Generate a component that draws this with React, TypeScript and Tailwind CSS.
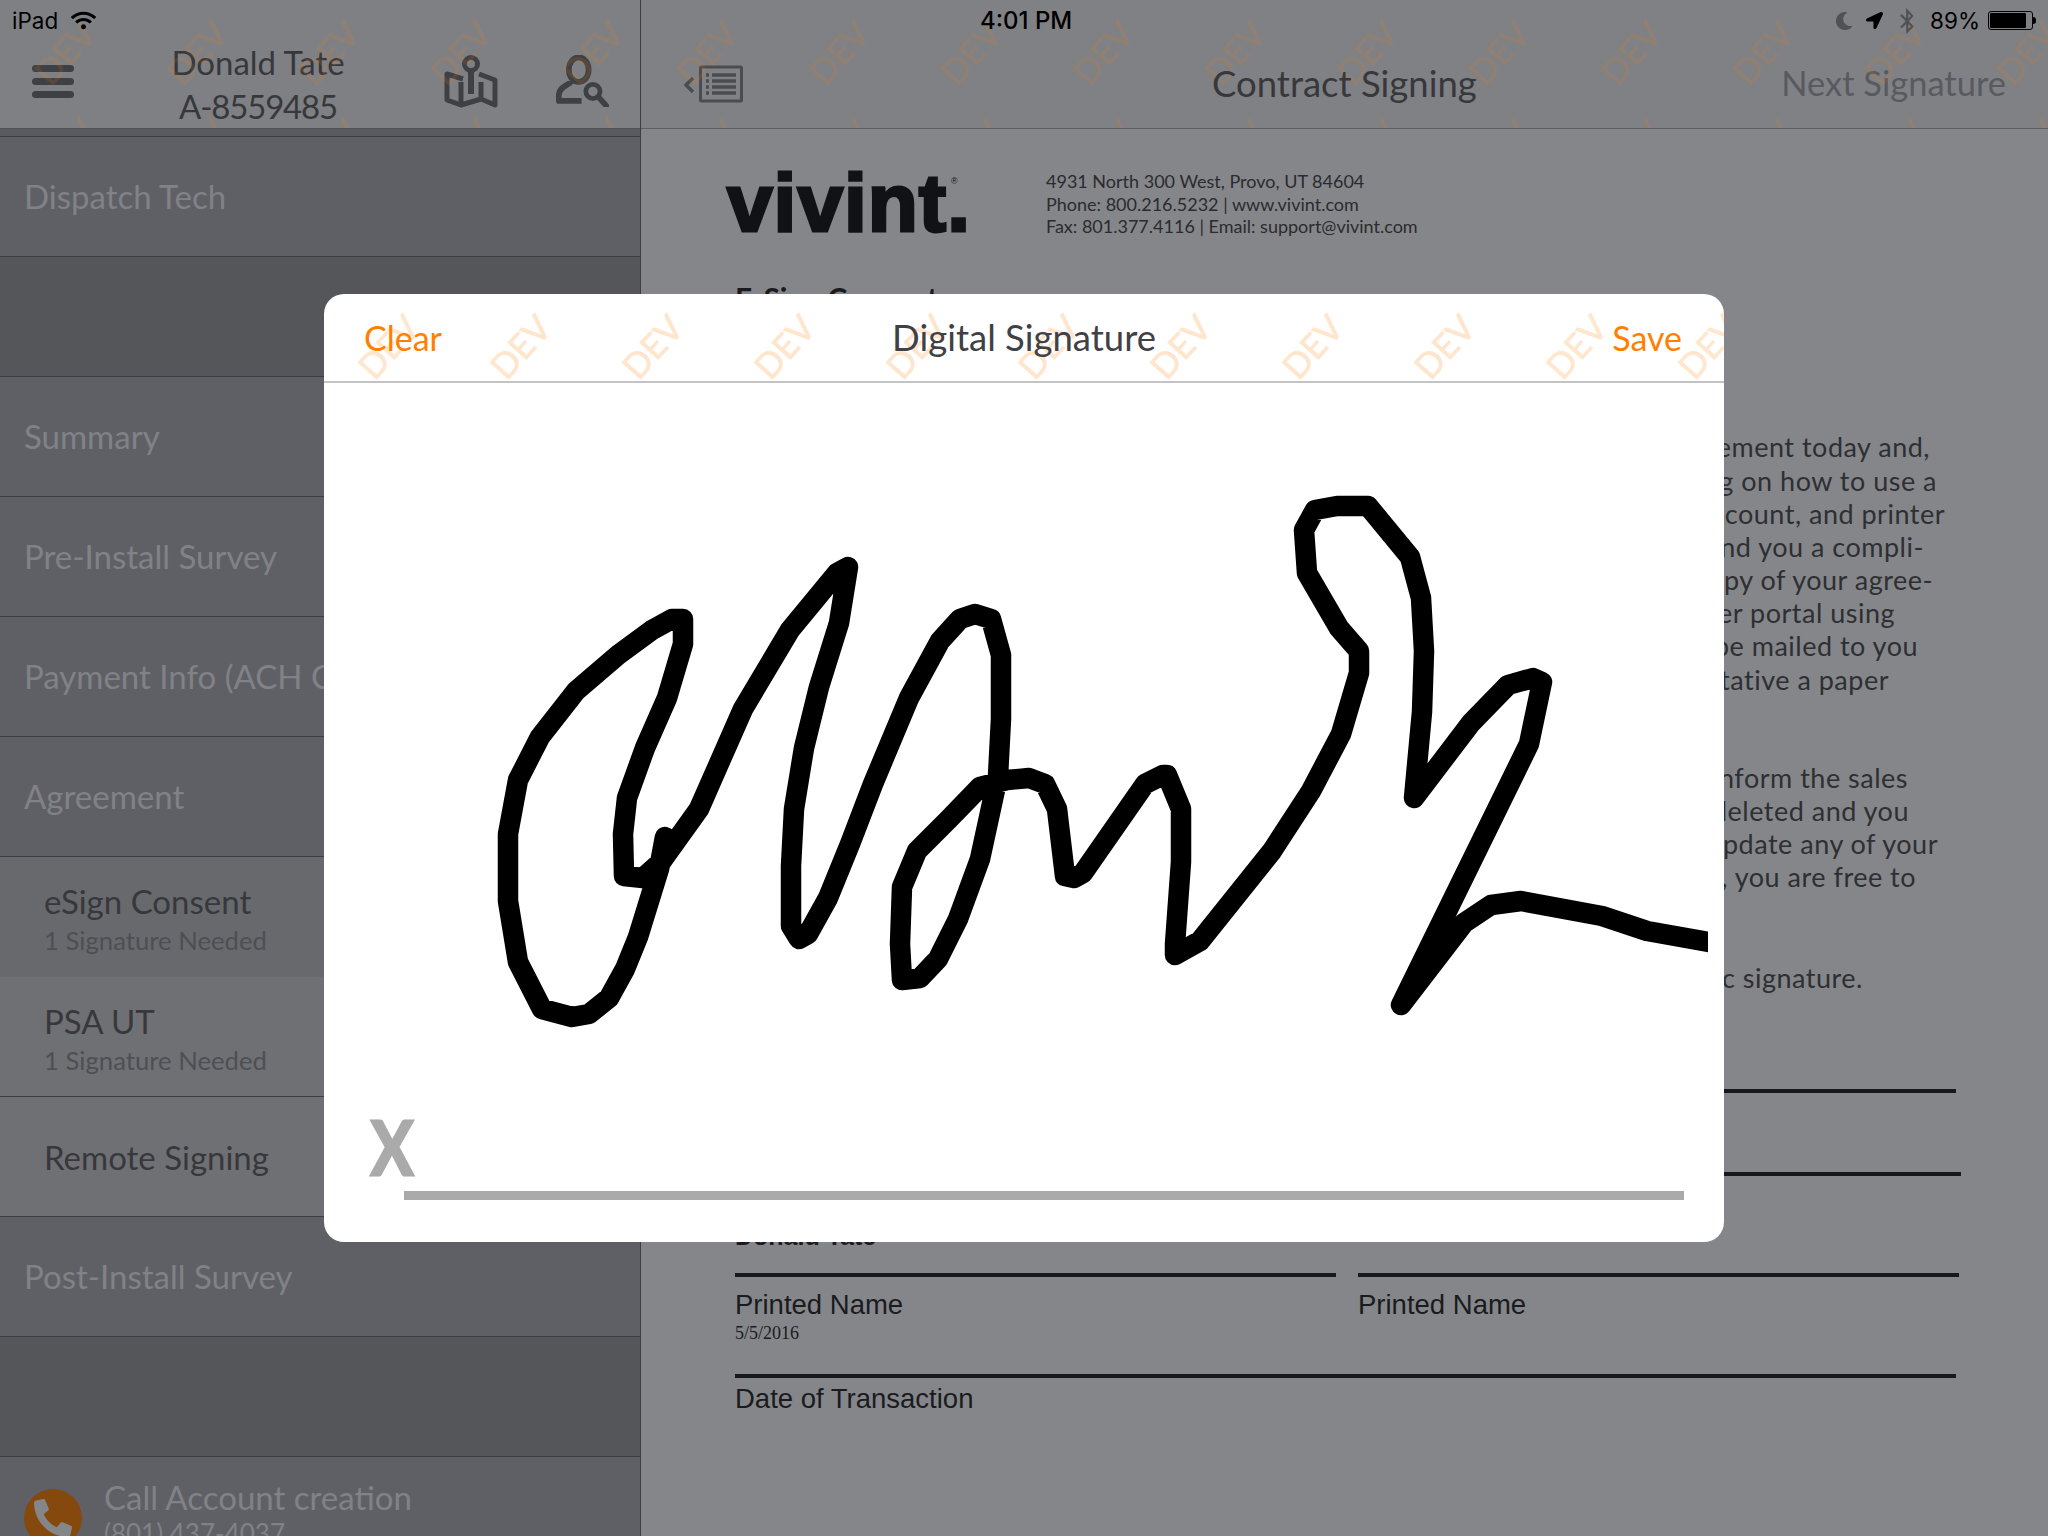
import React from 'react';
import { FaBluetoothB, FaLocationArrow, FaMoon, FaPhoneAlt, FaWifi } from 'react-icons/fa';

const SIGNATURE =
  'M665 837L659 869L638 937L625 969L609 998L589 1014L572 1017L542 1009L518 962L508 901L508 834L518 780L540 737L576 691L618 655L652 630L672 619L683 619L683 644L667 698L645 748L627 798L623 834L624 876L643 878L661 862L699 809L743 709L790 630L837 573L848 567L839 623L819 687L804 748L794 809L791 866L791 926L799 939L808 934L828 898L850 844L873 784L909 698L940 641L960 619L975 614L991 619L1001 655L1001 719L998 776L980 859L958 919L938 959L920 978L902 980L900 944L902 887L917 851L949 819L980 787L1007 780L1029 778L1045 784L1057 809L1065 876L1074 878L1083 873L1145 784L1163 775L1167 775L1181 809L1181 862L1175 944L1175 955L1200 941L1272 851L1311 791L1341 734L1359 673L1359 651L1339 628L1307 573L1304 530L1315 510L1337 506L1368 506L1410 557L1421 598L1424 651L1422 712L1414 798L1471 723L1508 685L1533 678L1542 682L1529 744L1401 1005L1464 923L1491 905L1521 901L1602 916L1647 931L1720 944';

function Watermark({ className }: { className: string }) {
  const rows = [0, 1];
  const tiles = Array.from({ length: 12 });
  return (
    <div className={`absolute inset-0 overflow-hidden pointer-events-none pt-[3px] ${className}`}>
      {rows.map((row) => (
        <div key={row} className="flex h-[98px] items-center">
          {tiles.map((_, i) => (
            <span
              key={i}
              className="flex w-[132px] shrink-0 justify-center rotate-[-48deg] text-[35px] leading-none text-[#ff8000] [-webkit-text-stroke:0.6px_#ff8000]"
            >
              DEV
            </span>
          ))}
        </div>
      ))}
    </div>
  );
}

function MapIcon() {
  return (
    <svg width="54" height="54" viewBox="0 0 54 54" fill="none" stroke="#3f4044" strokeWidth="5">
      <circle cx="27" cy="10" r="6.5" />
      <path d="M27 16V40" strokeWidth="6" />
      <path d="M19 25L3 20V46L17 51L37 45L51 51V26L35 20" strokeLinejoin="round" />
      <path d="M17 28V50M37 28V45" />
    </svg>
  );
}

function PersonSearchIcon() {
  return (
    <svg width="53" height="52" viewBox="0 0 56 54" fill="none" stroke="#3f4044" strokeWidth="6">
      <ellipse cx="24" cy="15" rx="10.5" ry="13" />
      <path d="M16 27C16 31 3 32 3 42V48H27" strokeLinejoin="round" />
      <circle cx="39" cy="38" r="7.5" strokeWidth="5" />
      <path d="M45 44L53 53" strokeLinecap="round" />
    </svg>
  );
}

function ListBackIcon() {
  return (
    <svg width="62" height="38" viewBox="0 0 62 38" fill="none" stroke="#4b4c50">
      <path d="M11 13L4 20L11 27" strokeWidth="3.5" />
      <rect x="18.5" y="2" width="41" height="34" strokeWidth="3" rx="1" />
      <path d="M30 10H54M30 16H54M30 22H54M30 28H54" strokeWidth="3.5" />
      <path d="M24 10H27M24 16H27M24 22H27M24 28H27" strokeWidth="3.5" />
    </svg>
  );
}

function SidebarRow({ label, dark }: { label?: string; dark?: boolean }) {
  return (
    <div
      className={`flex h-[120px] shrink-0 items-center whitespace-nowrap border-b border-[#3c3d41] pl-[24px] text-[33px] text-[#818287] ${
        dark ? 'bg-[#55565a]' : 'bg-[#5f6065]'
      }`}
    >
      {label}
    </div>
  );
}

function SubRow({ label, sub, className }: { label: string; sub?: string; className: string }) {
  return (
    <div className={`flex h-[120px] shrink-0 flex-col justify-center pl-[44px] ${sub ? 'pt-[3px]' : ''} ${className}`}>
      <div className="text-[33px] leading-[40px] text-[#37383c]">{label}</div>
      {sub && <div className="mt-[3px] text-[25.7px] leading-[32px] text-[#4e4f53]">{sub}</div>}
    </div>
  );
}

function Sidebar() {
  return (
    <aside className="flex w-[641px] shrink-0 flex-col border-r border-[#3c3d41] bg-[#5a5b60]">
      <header className="relative flex h-[129px] shrink-0 items-center border-b border-[#505155] bg-[#7f8084] pt-[34px]">
        <Watermark className="ml-[-2px] opacity-[0.12]" />
        <div className="ml-[32px] flex w-[42px] flex-col gap-[6px]">
          <div className="h-[7px] rounded-full bg-[#3f4044]" />
          <div className="h-[7px] rounded-full bg-[#3f4044]" />
          <div className="h-[7px] rounded-full bg-[#3f4044]" />
        </div>
        <div className="ml-[96px] mt-[5px] w-[176px] text-center text-[33px] leading-[44px] text-[#37383c]">
          <div>Donald Tate</div>
          <div className="tracking-[-1.2px]">A-8559485</div>
        </div>
        <div className="ml-[98px] flex items-center gap-[58px]">
          <MapIcon />
          <PersonSearchIcon />
        </div>
      </header>
      <div className="h-[8px] shrink-0 border-b border-[#3c3d41]" />
      <SidebarRow label="Dispatch Tech" />
      <SidebarRow dark />
      <SidebarRow label="Summary" />
      <SidebarRow label="Pre-Install Survey" />
      <SidebarRow label="Payment Info (ACH Consent)" />
      <SidebarRow label="Agreement" />
      <SubRow label="eSign Consent" sub="1 Signature Needed" className="bg-[#68696d]" />
      <SubRow label="PSA UT" sub="1 Signature Needed" className="border-b border-[#3c3d41] bg-[#6f7074]" />
      <SubRow label="Remote Signing" className="border-b border-[#3c3d41] bg-[#6f7074]" />
      <SidebarRow label="Post-Install Survey" />
      <SidebarRow dark />
      <div className="flex h-[120px] shrink-0 bg-[#5f6065] pl-[24px] pt-[32px]">
        <div className="flex h-[58px] w-[58px] items-center justify-center rounded-full bg-[#85490e]">
          <FaPhoneAlt size={38} className="text-[#85868a]" />
        </div>
        <div className="ml-[22px] -mt-[11px]">
          <div className="text-[33px] leading-[38px] text-[#818287]">Call Account creation</div>
          <div className="text-[26px] leading-[34px] text-[#818287]">(801) 437-4037</div>
        </div>
      </div>
    </aside>
  );
}

const PARAGRAPH_ONE = [
  { text: 'You are signing your agreement today and,', w: 'w-[1195px]' },
  { text: 'you will receive training on how to use a', w: 'w-[1202px]' },
  { text: 'computer, an email account, and printer', w: 'w-[1210px]' },
  { text: 'are required, we will send you a compli-', w: 'w-[1189px]' },
  { text: 'mentary paper copy of your agree-', w: 'w-[1198px]' },
  { text: 'ment in your customer portal using', w: 'w-[1160px]' },
  { text: 'paper copies can be mailed to you', w: 'w-[1183px]' },
  { text: 'or ask the representative a paper', w: 'w-[1154px]' },
];

const PARAGRAPH_TWO = [
  { text: 'At any time you may inform the sales', w: 'w-[1173px]' },
  { text: 'that the record be deleted and you', w: 'w-[1174px]' },
  { text: 'and you need to update any of your', w: 'w-[1203px]' },
  { text: 'Before you sign, you are free to', w: 'w-[1181px]' },
];

function DocLine({ text, w }: { text: string; w: string }) {
  return (
    <div className={`flex h-[33.2px] items-center justify-end whitespace-nowrap ${w}`}>{text}</div>
  );
}

function Contract() {
  return (
    <div className="flex-1 overflow-hidden pl-[94px] pt-[39px] text-[#1a1b1e]">
      <div className="flex h-[72px] items-start">
        <div className="relative -ml-[8px] -mt-[1px] h-[72px] w-[319px] font-['Liberation_Sans',sans-serif] text-[82px] font-bold leading-[72px] tracking-[1px] text-[#111215] [-webkit-text-stroke:3px_#111215]">
          vivint.
          <span className="absolute left-[224px] top-[10px] text-[9px] font-normal leading-none tracking-normal [-webkit-text-stroke:0px_#111215]">
            ®
          </span>
        </div>
        <div className="mt-[2px] text-[18px] leading-[22.5px] text-[#2a2b2e]">
          <div>4931 North 300 West, Provo, UT 84604</div>
          <div>Phone: 800.216.5232 | www.vivint.com</div>
          <div>Fax: 801.377.4116 | Email: support@vivint.com</div>
        </div>
      </div>
      <div className="mt-[38px] h-[40px] text-[30px] font-bold leading-[40px]">E-Sign Consent</div>
      <div className="mt-[113px] text-[27px] tracking-[0.5px] text-[#2e2f33]">
        {PARAGRAPH_ONE.map((line) => (
          <DocLine key={line.text} {...line} />
        ))}
        <div className="h-[65px]" />
        {PARAGRAPH_TWO.map((line) => (
          <DocLine key={line.text} {...line} />
        ))}
        <div className="h-[67px]" />
        <DocLine text="I agree to use an electronic signature." w="w-[1128px]" />
      </div>
      <div className="mt-[95px] h-[4px] w-[1221px] bg-[#17181b]" />
      <div className="mt-[79px] h-[4px] w-[1226px] bg-[#17181b]" />
      <div className="mt-[50px] h-[20px] overflow-hidden font-['Liberation_Sans',sans-serif] text-[25px] font-bold leading-[20px]">
        Donald Tate
      </div>
      <div className="mt-[27px] flex gap-[22px] font-['Liberation_Sans',sans-serif] text-[27.5px] leading-[32px]">
        <div className="w-[601px]">
          <div className="h-[4px] bg-[#17181b]" />
          <div className="mt-[12px]">Printed Name</div>
          <div className="mt-[2px] font-['Liberation_Serif',serif] text-[18px] leading-[20px]">5/5/2016</div>
        </div>
        <div className="w-[601px]">
          <div className="h-[4px] bg-[#17181b]" />
          <div className="mt-[12px]">Printed Name</div>
        </div>
      </div>
      <div className="mt-[31px] h-[4px] w-[1221px] bg-[#17181b]" />
      <div className="mt-[5px] font-['Liberation_Sans',sans-serif] text-[27.5px] leading-[32px]">
        Date of Transaction
      </div>
    </div>
  );
}

function SignatureModal() {
  return (
    <div className="absolute left-[324px] top-[294px] flex h-[948px] w-[1400px] flex-col overflow-hidden rounded-[20px] bg-white">
      <div className="relative flex h-[89px] shrink-0 items-center justify-between border-b-2 border-[#c4c4c4] pl-[40px] pr-[42px] text-[34px] text-[#ff7f00]">
        <Watermark className="ml-[-2px] opacity-[0.2]" />
        <span className="relative">Clear</span>
        <span className="absolute left-[360px] w-[680px] text-center text-[36.5px] text-[#404145]">Digital Signature</span>
        <span className="relative">Save</span>
      </div>
      <div className="relative flex-1">
        <svg
          className="absolute left-0 top-0"
          width="1384"
          height="859"
          viewBox="324 383 1384 859"
          fill="none"
          stroke="#000"
          strokeWidth="20.5"
          strokeLinejoin="round"
          strokeLinecap="round"
        >
          <path d={SIGNATURE} />
        </svg>
        <div className="absolute bottom-[42px] left-[47px] right-[40px] flex items-end">
          <span className="mb-[16px] w-[33px] origin-left scale-x-[0.85] text-[74px] font-bold leading-[74px] text-[#aaaaaa] [-webkit-text-stroke:3px_#aaaaaa]">
            X
          </span>
          <div className="h-[9px] flex-1 bg-[#aaaaaa]" />
        </div>
      </div>
    </div>
  );
}

export default function App() {
  return (
    <div className="relative flex h-[1536px] w-[2048px] overflow-hidden bg-[#85868a] font-['Lato',sans-serif]">
      <Sidebar />
      <main className="flex min-w-0 flex-1 flex-col">
        <header className="relative flex h-[129px] shrink-0 items-center border-b border-[#5d5e62] bg-[#808185] pl-[41px] pr-[42px] pt-[40px]">
          <Watermark className="ml-[-1px] opacity-[0.12]" />
          <ListBackIcon />
          <div className="absolute left-[571px] top-[59px] text-[36.5px] leading-[48px] text-[#37383c]">Contract Signing</div>
          <div className="ml-auto -mt-[2px] text-[34.5px] leading-[48px] text-[#595a5f]">Next Signature</div>
        </header>
        <Contract />
      </main>

      <div className="absolute left-[12px] right-[12px] top-0 flex h-[41px] items-center font-['Inter',sans-serif] text-[22.5px] text-black">
        <span>iPad</span>
        <FaWifi size={25} className="ml-[13px]" />
        <span className="absolute left-[968px] text-[24px] font-medium">4:01 PM</span>
        <div className="ml-auto flex items-center">
          <FaMoon size={18} className="text-[#505155]" />
          <FaLocationArrow size={17} className="ml-[13px]" />
          <FaBluetoothB size={26} className="ml-[11px] text-[#505155]" />
          <span className="ml-[10px]">89%</span>
          <div className="ml-[8px] h-[19px] w-[45px] rounded-[3px] border border-black p-[1px]">
            <div className="h-full w-[89%] rounded-[1px] bg-black" />
          </div>
          <div className="h-[7px] w-[3px] rounded-r-full bg-black" />
        </div>
      </div>

      <SignatureModal />
    </div>
  );
}
